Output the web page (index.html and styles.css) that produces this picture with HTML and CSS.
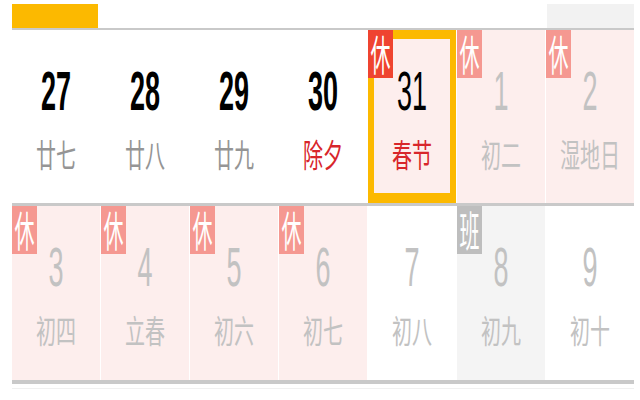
FILE: index.html
```html
<!DOCTYPE html>
<html lang="zh-CN">
<head>
<meta charset="utf-8">
<title>日历</title>
<link rel="stylesheet" href="styles.css">
</head>
<body>
<div class="cal">
  <div class="tabs">
    <div class="tab-active"></div>
    <div class="tab-end"></div>
  </div>
  <div class="week">
    <div class="day"><span class="num strong">27</span><span class="lunar">廿七</span></div>
    <div class="day"><span class="num strong">28</span><span class="lunar">廿八</span></div>
    <div class="day"><span class="num strong">29</span><span class="lunar">廿九</span></div>
    <div class="day"><span class="num strong">30</span><span class="lunar fest">除夕</span></div>
    <div class="day rest today"><span class="badge red"><span>休</span></span><span class="num dark">31</span><span class="lunar fest">春节</span></div>
    <div class="day rest"><span class="badge"><span>休</span></span><span class="num dim">1</span><span class="lunar dim">初二</span></div>
    <div class="day rest"><span class="badge"><span>休</span></span><span class="num dim">2</span><span class="lunar dim">湿地日</span></div>
  </div>
  <div class="week last">
    <div class="day rest"><span class="badge"><span>休</span></span><span class="num dim">3</span><span class="lunar dim">初四</span></div>
    <div class="day rest"><span class="badge"><span>休</span></span><span class="num dim">4</span><span class="lunar dim">立春</span></div>
    <div class="day rest"><span class="badge"><span>休</span></span><span class="num dim">5</span><span class="lunar dim">初六</span></div>
    <div class="day rest"><span class="badge"><span>休</span></span><span class="num dim">6</span><span class="lunar dim">初七</span></div>
    <div class="day"><span class="num dim">7</span><span class="lunar dim">初八</span></div>
    <div class="day work"><span class="badge grey"><span>班</span></span><span class="num dim">8</span><span class="lunar dim">初九</span></div>
    <div class="day"><span class="num dim">9</span><span class="lunar dim">初十</span></div>
  </div>
  <div class="foot-line"></div>
</div>
</body>
</html>
```
FILE: styles.css
```css
body {
  margin: 0;
  background: #fff;
  font-family: "Liberation Sans", Arial, sans-serif;
}
.cal {
  width: 622px;
  margin-left: 12px;
  padding-top: 4px;
}
.tabs {
  display: flex;
  justify-content: space-between;
  height: 24px;
  border-bottom: 2px solid #c9c9c9;
}
.tab-active {
  width: 86px;
  background: #fcb900;
}
.tab-end {
  width: 87px;
  background: #f2f2f2;
}
.week {
  display: grid;
  grid-template-columns: repeat(7, 88px);
  column-gap: 1px;
  height: 173px;
  border-bottom: 3px solid #c9c9c9;
}
.week.last {
  height: 174px;
  border-bottom-width: 4px;
}
.day {
  position: relative;
  box-sizing: border-box;
  padding-top: 49px;
  text-align: center;
  background: #fff;
}
.day.rest {
  background: #fdeeed;
}
.day.work {
  background: #f4f4f4;
}
.day.today {
  box-shadow: inset 6px 0 0 #fcb900, inset -6px 0 0 #fcb900, inset 0 9px 0 #fcb900, inset 0 -10px 0 #fcb900;
}
.num {
  display: block;
  font-size: 27px;
  line-height: 26px;
  color: #000;
  transform: scaleY(2.05);
}
.num.strong {
  font-weight: bold;
}
.num.dim {
  color: #c2c2c2;
}
.lunar {
  display: block;
  margin-top: 39px;
  font-family: "Noto Sans CJK SC", "Noto Sans", sans-serif;
  font-size: 20px;
  line-height: 20px;
  color: #959595;
  transform: scaleY(1.6);
}
.lunar.fest {
  color: #d8262b;
}
.lunar.dim {
  color: #c2c2c2;
}
.badge {
  position: absolute;
  top: 0;
  left: 0;
  width: 25px;
  height: 48px;
  display: flex;
  align-items: center;
  justify-content: center;
  background: #f59891;
  color: #fff;
  font-family: "Noto Sans CJK SC", sans-serif;
  font-size: 20px;
}
.badge span {
  display: block;
  line-height: 20px;
  transform: scaleY(2.1);
}
.badge.red {
  background: #ef4430;
}
.badge.grey {
  background: #bebebe;
}
.foot-line {
  margin-top: 4px;
  height: 1px;
  background: #f0f0f0;
}
```
